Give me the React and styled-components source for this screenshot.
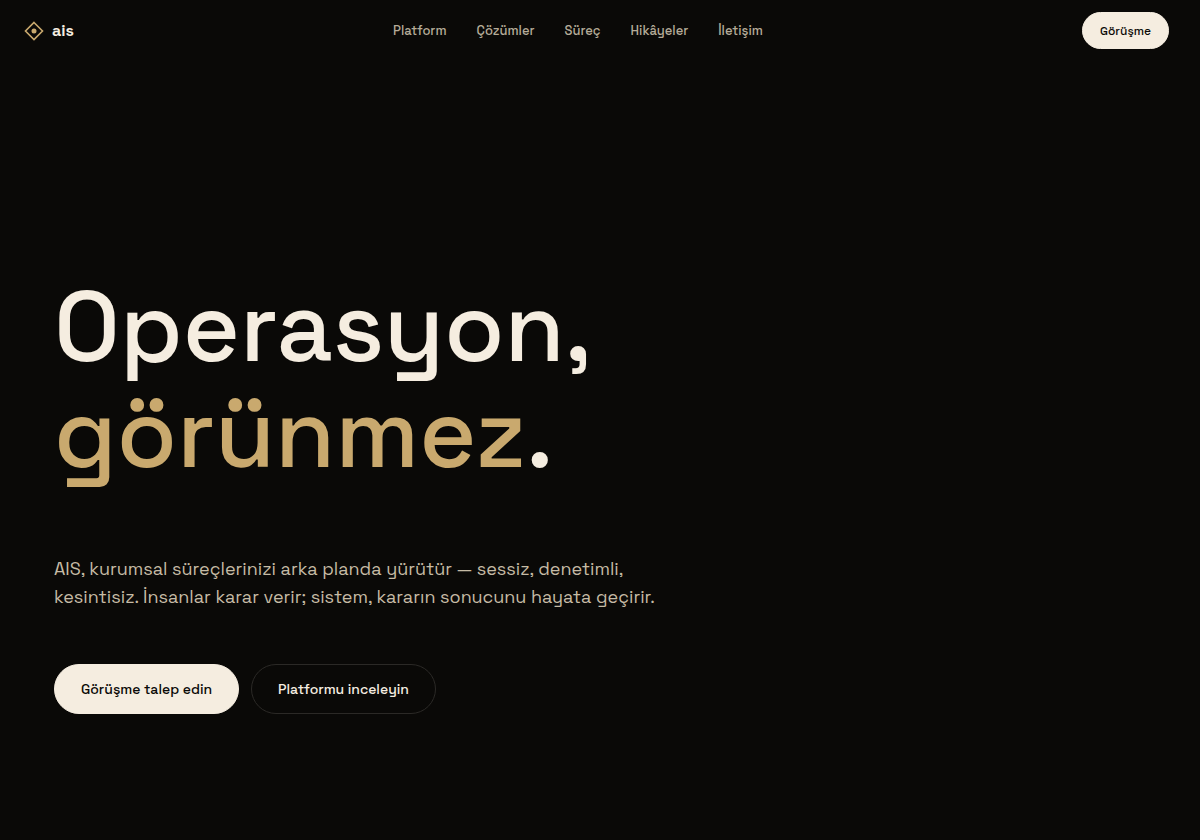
import React from "react";
import styled, { createGlobalStyle } from "styled-components";

const GlobalStyle = createGlobalStyle`
  *, *::before, *::after { box-sizing: border-box; }
  body {
    margin: 0;
    background: #0a0907;
    color: #f5ede0;
    font-family: "Space Grotesk", Inter, "Liberation Sans", sans-serif;
  }
`;

const Header = styled.header`
  display: flex;
  align-items: center;
  justify-content: space-between;
  padding: 12px 31px 12px 24px;
`;

const Brand = styled.a`
  display: flex;
  align-items: center;
  gap: 8px;
  color: #f5ede0;
  font-size: 16px;
  line-height: 20px;
  font-weight: 600;
  text-decoration: none;
`;

const Nav = styled.nav`
  display: flex;
  gap: 30px;
`;

const NavLink = styled.a`
  color: #b5ab98;
  font-size: 13px;
  line-height: 20px;
  font-weight: 500;
  text-decoration: none;
`;

const Button = styled.button`
  height: ${(p) => (p.$small ? 37 : 50)}px;
  padding: 0 ${(p) => (p.$small ? 17 : 26)}px;
  border: 1px solid ${(p) => (p.$outline ? "#2b2926" : "#f5ede0")};
  border-radius: 25px;
  background: ${(p) => (p.$outline ? "transparent" : "#f5ede0")};
  color: ${(p) => (p.$outline ? "#f5ede0" : "#0a0907")};
  font-family: inherit;
  font-size: ${(p) => (p.$small ? 12 : 14)}px;
  font-weight: 500;
  white-space: nowrap;
  cursor: pointer;
`;

const Hero = styled.main`
  padding: 214px 54px 125px;
`;

const Title = styled.h1`
  margin: 0;
  font-size: 98px;
  line-height: 106px;
  font-weight: 500;
`;

const Accent = styled.span`
  color: #c9a96e;
`;

const Lead = styled.p`
  max-width: 620px;
  margin: 68px 0 0;
  color: #c6bba5;
  font-size: 18px;
  line-height: 28px;
`;

const Actions = styled.div`
  display: flex;
  flex-wrap: wrap;
  gap: 12px;
  margin-top: 53px;
`;

const links = [
  ["Platform", "#platform"],
  ["Çözümler", "#cozumler"],
  ["Süreç", "#surec"],
  ["Hikâyeler", "#hikayeler"],
  ["İletişim", "#iletisim"],
];

function LogoMark() {
  return (
    <svg width="20" height="20" viewBox="0 0 20 20" fill="none" aria-hidden="true">
      <path d="M10 1.5 18.5 10 10 18.5 1.5 10Z" stroke="#c9a96e" strokeWidth="1.6" />
      <circle cx="10" cy="10" r="2.5" fill="#c9a96e" />
    </svg>
  );
}

export default function App() {
  return (
    <>
      <GlobalStyle />
      <Header>
        <Brand href="#">
          <LogoMark />
          ais
        </Brand>
        <Nav>
          {links.map(([label, href]) => (
            <NavLink key={href} href={href}>{label}</NavLink>
          ))}
        </Nav>
        <Button $small>Görüşme</Button>
      </Header>
      <Hero>
        <Title>
          Operasyon,
          <br />
          <Accent>görünmez</Accent>.
        </Title>
        <Lead>
          AIS, kurumsal süreçlerinizi arka planda yürütür — sessiz, denetimli,
          <br />
          kesintisiz. İnsanlar karar verir; sistem, kararın sonucunu hayata geçirir.
        </Lead>
        <Actions>
          <Button>Görüşme talep edin</Button>
          <Button $outline>Platformu inceleyin</Button>
        </Actions>
      </Hero>
    </>
  );
}
